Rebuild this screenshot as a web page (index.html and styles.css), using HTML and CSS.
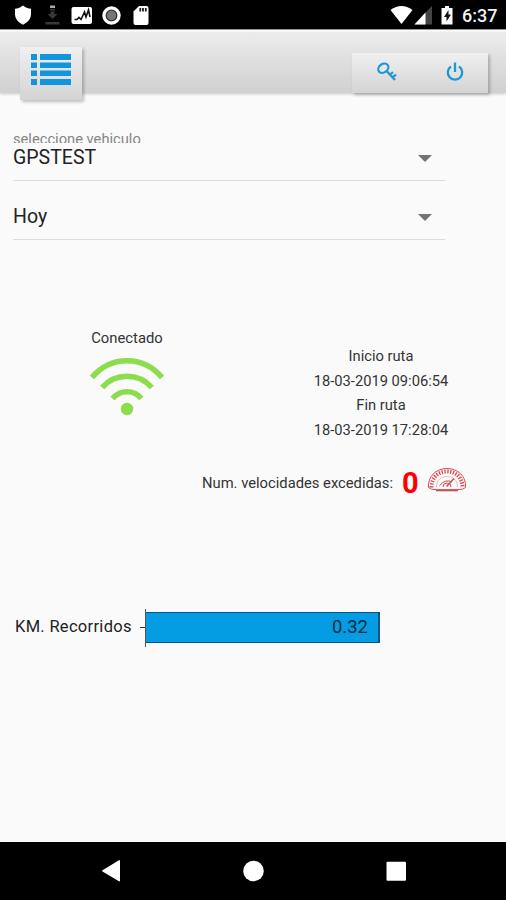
FILE: index.html
```html
<!DOCTYPE html>
<html lang="es">
<head>
<meta charset="utf-8">
<meta name="viewport" content="width=device-width">
<title>GPS</title>
<link rel="stylesheet" href="styles.css">
</head>
<body>
<div class="status">
  <svg class="status-icons" viewBox="0 0 160 30" width="160" height="30">
    <path fill="#fff" d="M23 5.500C20 8 17.500 8.500 15 8.800V14c0 5 3.500 8.500 8 10.700 4.500-2.200 8-5.700 8-10.700V8.800C28.500 8.500 26 8 23 5.500z"/>
    <path fill="#aaa" d="M50 5.500h5V8h-5z"/>
    <path fill="#383838" d="M50 9h5v1.500h-5zM50.500 11.500h4V14h3l-5 5-5-5h3zM45.500 22h14v2.500h-14z"/>
    <rect x="71.500" y="7" width="20.500" height="17" rx="2" fill="#fff"/>
    <path d="M74.500 19.500h2.500l2-2 2 2 3.500-7.500 1.500 5 2.500-7 1.500 7" fill="none" stroke="#111" stroke-width="1.600"/>
    <circle cx="111.500" cy="15.500" r="9.200" fill="#fff"/>
    <circle cx="111.500" cy="15.500" r="5.300" fill="#777" stroke="#333" stroke-width="1.300"/>
    <path fill="#fff" d="M139 6h7.500q2 0 2 2v15q0 2-2 2H135.500q-2 0-2-2V11.500z"/>
    <path stroke="#222" stroke-width="1.800" d="M140.300 8v3.500M143 8v3.500M145.800 8v3.500"/>
  </svg>
  <div class="status-right">
    <svg viewBox="0 0 72 30" width="72" height="30">
      <path fill="#fff" d="M.5 10Q11.500 2 22.500 10L11.500 24z"/>
      <path fill="#444" d="M42 6v18.500H24z"/>
      <path fill="#fff" d="M35.500 12.500v12H24.500z"/>
      <path fill="#fff" d="M55 6h4v2h3.500v16.500h-11V8H55z"/>
      <path fill="#111" d="M58.500 10l-4.500 7h2.500v4.500l4.500-7h-2.500z"/>
    </svg>
    <span class="clock">6:37</span>
  </div>
</div>
<header class="toolbar">
  <button class="raised menu" aria-label="Menu">
    <svg viewBox="0 0 40 32" width="40" height="32" fill="#1296db">
      <path d="M0 0h6v6H0zM9 0h31v6H9zM0 8.500h6v5.500H0zM9 8.500h31v5.500H9zM0 16.500h6V22H0zM9 16.500h31V22H9zM0 25h6v6H0zM9 25h31v6H9z"/>
    </svg>
  </button>
  <div class="raised actions">
    <svg viewBox="0 0 20 20" width="20" height="20" fill="none" stroke="#1f96d6" stroke-width="2.200">
      <ellipse cx="6.300" cy="6.200" rx="5.400" ry="4.200" transform="rotate(-35 6.300 6.200)"/>
      <path d="M10 9.500l8 8.500M13 12.500l3-2.300M15.500 15.300l3.500-2.600"/>
    </svg>
    <svg viewBox="0 0 20 20" width="20" height="20" fill="none" stroke="#1f96d6" stroke-width="2.300">
      <path d="M6 4.500a7.200 7.200 0 1 0 8 0M10 .5v9.500"/>
    </svg>
  </div>
</header>
<main>
  <section class="fields">
    <div class="hint"><span>seleccione vehiculo</span></div>
    <div class="select first"><span>GPSTEST</span><i></i></div>
    <div class="select"><span class="day">Hoy</span><i></i></div>
  </section>
  <section class="info">
    <div class="connection">
      <span>Conectado</span>
      <svg viewBox="0 0 76 62" width="76" height="62" fill="none" stroke="#8bdd4d" stroke-width="5.600">
        <path d="M3 22.500Q17 5.700 38 5.700T73 22.500M13.200 32.500Q23 21.200 38 21.200T62.800 32.500M23.600 43.500Q29 36.700 38 36.700T52.400 43.500"/>
        <circle cx="38" cy="54" r="6.200" fill="#8bdd4d" stroke="none"/>
      </svg>
    </div>
    <div class="route">
      <span>Inicio ruta</span>
      <span class="date">18-03-2019 09:06:54</span>
      <span>Fin ruta</span>
      <span class="date">18-03-2019 17:28:04</span>
    </div>
  </section>
  <section class="speeding">
    <span class="label">Num. velocidades excedidas:</span>
    <strong>0</strong>
    <svg viewBox="0 0 40 26" width="40" height="26" fill="none" stroke="#d84a50">
      <path d="M9 22.500Q4 23 1.500 20.500C.5 9.500 9 1.500 20 1.500S39.500 9.500 38.500 20.500Q36 23 31 22.500" stroke-width="1"/>
      <path d="M4.500 20.500C4.500 10.500 11 4.500 20 4.500S35.500 10.500 35.500 20.500" stroke-width="4" stroke-dasharray="1.300 1.500"/>
      <path d="M9.500 20C9.500 13 14 9.500 20 9.500S30.500 13 30.500 20" stroke-width=".6" opacity=".6"/>
      <path d="M12.500 18.500Q19 11.500 25 15M16 20a4 4 0 0 1 8 0" stroke-width="1"/>
      <path d="M19.500 19.500L27 11.500" stroke-width="1.600"/>
      <path d="M9 23.200h22" stroke-width="2.200"/>
    </svg>
  </section>
  <section class="chart">
    <span class="chart-label">KM. Recorridos</span>
    <div class="tick"></div>
    <div class="axis"></div>
    <div class="bar"><span>0.32</span></div>
  </section>
</main>
<nav class="navbar">
  <svg viewBox="0 0 506 58" width="506" height="58" fill="#fff">
    <path d="M102.500 28.200l16-9.800q1.500-.8 1.500.7v19.300q0 1.500-1.500.7l-16-9.700q-1-.6 0-1.200z"/>
    <circle cx="253.500" cy="29" r="10.300"/>
    <rect x="386.500" y="19.800" width="19.500" height="19" rx="1"/>
  </svg>
</nav>
</body>
</html>
```
FILE: styles.css
```css
* { box-sizing: border-box; }
body {
  margin: 0;
  width: 506px;
  height: 900px;
  display: flex;
  flex-direction: column;
  overflow: hidden;
  background: #fafafa;
  color: #222;
  font-family: Roboto, "Liberation Sans", sans-serif;
}
svg { display: block; flex: none; }
.status {
  flex: none;
  height: 30px;
  display: flex;
  justify-content: space-between;
  background: #000;
  border-bottom: 1px solid #999;
}
.status-right { display: flex; padding-right: 9px; }
.clock {
  width: 35px;
  line-height: 32px;
  font-size: 18px;
  font-weight: 500;
  color: #f2f2f2;
  white-space: nowrap;
}
.toolbar {
  flex: none;
  height: 63px;
  display: flex;
  justify-content: space-between;
  align-items: flex-start;
  padding: 17px 18px 0 20px;
  background: linear-gradient(#fff, #ececec 4%, #d0d0d0);
  box-shadow: 0 1px 3px rgba(0, 0, 0, .2);
}
.raised {
  border: 0;
  background: linear-gradient(#f0f0f0, #d4d4d4);
  box-shadow: 2px 2px 3px rgba(0, 0, 0, .24);
}
.menu {
  display: flex;
  align-items: flex-start;
  width: 62px;
  height: 53px;
  padding: 7px 11px;
}
.actions {
  width: 136px;
  height: 40px;
  margin-top: 6px;
  padding: 9px 23px 0 25px;
  display: flex;
  justify-content: space-between;
}
main { flex: 1; display: flex; flex-direction: column; }
.fields { width: 445px; padding: 37px 0 0 13px; }
.hint {
  height: 13px;
  overflow: hidden;
  font-size: 14.700px;
  line-height: 18px;
  color: #858585;
}
.hint span { display: block; }
.select {
  height: 59px;
  display: flex;
  justify-content: space-between;
  align-items: center;
  padding: 13px 13px 0 0;
  border-bottom: 1px solid #dcdcdc;
  font-size: 19.500px;
  line-height: 24px;
}
.select.first { height: 38px; padding-top: 3px; align-items: flex-start; }
.select i {
  border: 7px solid transparent;
  border-top-color: #737373;
  border-bottom: 0;
  margin-top: 1px;
}
.select.first i { margin-top: 9px; }
.info { display: flex; justify-content: space-between; padding: 88px 57px 0 89px; }
.connection {
  width: 76px;
  display: flex;
  flex-direction: column;
  align-items: center;
  font-size: 14.800px;
  line-height: 20px;
  color: #333;
}
.connection svg { margin-top: 7px; }
.route {
  width: 136px;
  margin-top: 16px;
  display: flex;
  flex-direction: column;
  align-items: center;
  font-size: 14.700px;
  line-height: 24.700px;
  color: #333;
  white-space: nowrap;
}
.speeding {
  height: 40px;
  margin-top: 20px;
  padding-left: 202px;
  display: flex;
  align-items: center;
}
.label { width: 200px; font-size: 14.750px; color: #333; white-space: nowrap; }
.speeding strong { width: 25px; font-size: 29px; line-height: 40px; color: #f00; }
.speeding svg { margin-top: -6px; }
.chart {
  height: 38px;
  margin-top: 106px;
  padding-left: 15px;
  display: flex;
  align-items: center;
}
.chart-label {
  width: 125px;
  padding-bottom: 2px;
  font-size: 16.500px;
  letter-spacing: .3px;
  color: #222;
  white-space: nowrap;
}
.tick { width: 5px; height: 1px; background: #333; }
.axis { width: 1px; height: 38px; background: #555; }
.bar {
  width: 234px;
  height: 31px;
  display: flex;
  align-items: center;
  justify-content: flex-end;
  padding: 0 10px 1px 0;
  border: 1px solid #07548a;
  border-right-width: 2px;
  border-left: 0;
  background: #049ce3;
  color: #092d42;
  font-size: 18.500px;
}
.navbar { flex: none; height: 58px; background: #000; }
```
